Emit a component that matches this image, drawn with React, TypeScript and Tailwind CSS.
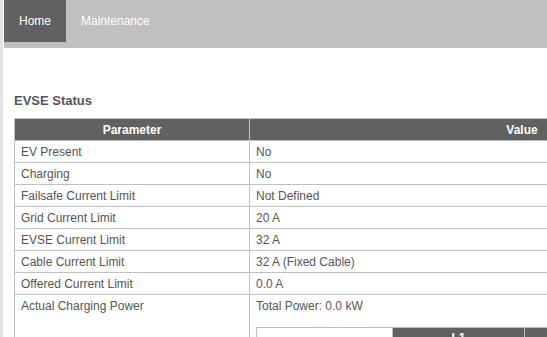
import React from "react";

const rows: [string, string][] = [
  ["EV Present", "No"],
  ["Charging", "No"],
  ["Failsafe Current Limit", "Not Defined"],
  ["Grid Current Limit", "20 A"],
  ["EVSE Current Limit", "32 A"],
  ["Cable Current Limit", "32 A (Fixed Cable)"],
  ["Offered Current Limit", "0.0 A"],
];

export default function App() {
  return (
    <div
      className="w-[547px] h-[337px] overflow-hidden flex bg-white text-[#555555]"
      style={{ fontFamily: '"Liberation Sans", Arial, sans-serif' }}
    >
      <div className="w-[3px] shrink-0 bg-[#e2e2e2]" />
      <div className="ml-[1px] flex-1 min-w-0">
        <div className="h-[48px] bg-[#c0c0c0] flex items-start text-[12px] text-white">
          <div className="h-[42px] w-[62px] bg-[#616161] flex items-center justify-center">Home</div>
          <div className="h-[42px] flex items-center pl-[15px]">Maintenance</div>
        </div>
        <div className="pl-[10px]">
          <h2 className="mt-[45px] mb-[10px] text-[13px] font-bold leading-[15px] text-[#555555]">EVSE Status</h2>
          <table className="border-collapse text-[12px] leading-[14px] w-[780px] table-fixed">
            <colgroup>
              <col className="w-[235px]" />
              <col className="w-[545px]" />
            </colgroup>
            <thead>
              <tr className="bg-[#616161] text-white font-bold h-[22px]">
                <th className="border border-[#c0c0c0] text-center">Parameter</th>
                <th className="border border-[#c0c0c0] text-center">Value</th>
              </tr>
            </thead>
            <tbody>
              {rows.map(([p, v]) => (
                <tr key={p} className="h-[22px]">
                  <td className="border border-[#c0c0c0] px-[6px] align-middle">{p}</td>
                  <td className="border border-[#c0c0c0] px-[6px] align-middle">{v}</td>
                </tr>
              ))}
              <tr>
                <td className="border border-[#c0c0c0] px-[6px] pt-[4px] align-top">Actual Charging Power</td>
                <td className="border border-[#c0c0c0] px-[6px] pt-[4px] align-top">
                  <div>Total Power: 0.0 kW</div>
                  <table className="mt-[14px] border-collapse table-fixed w-[400px]">
                    <colgroup>
                      <col className="w-[136px]" />
                      <col className="w-[132px]" />
                      <col className="w-[132px]" />
                    </colgroup>
                    <thead>
                      <tr className="h-[21px]">
                        <th className="border border-[#c0c0c0] bg-white"></th>
                        <th className="border border-[#c0c0c0] bg-[#616161] text-white text-center">L1</th>
                        <th className="border border-[#c0c0c0] bg-[#616161] text-white text-center">L2</th>
                      </tr>
                    </thead>
                  </table>
                </td>
              </tr>
            </tbody>
          </table>
        </div>
      </div>
    </div>
  );
}
